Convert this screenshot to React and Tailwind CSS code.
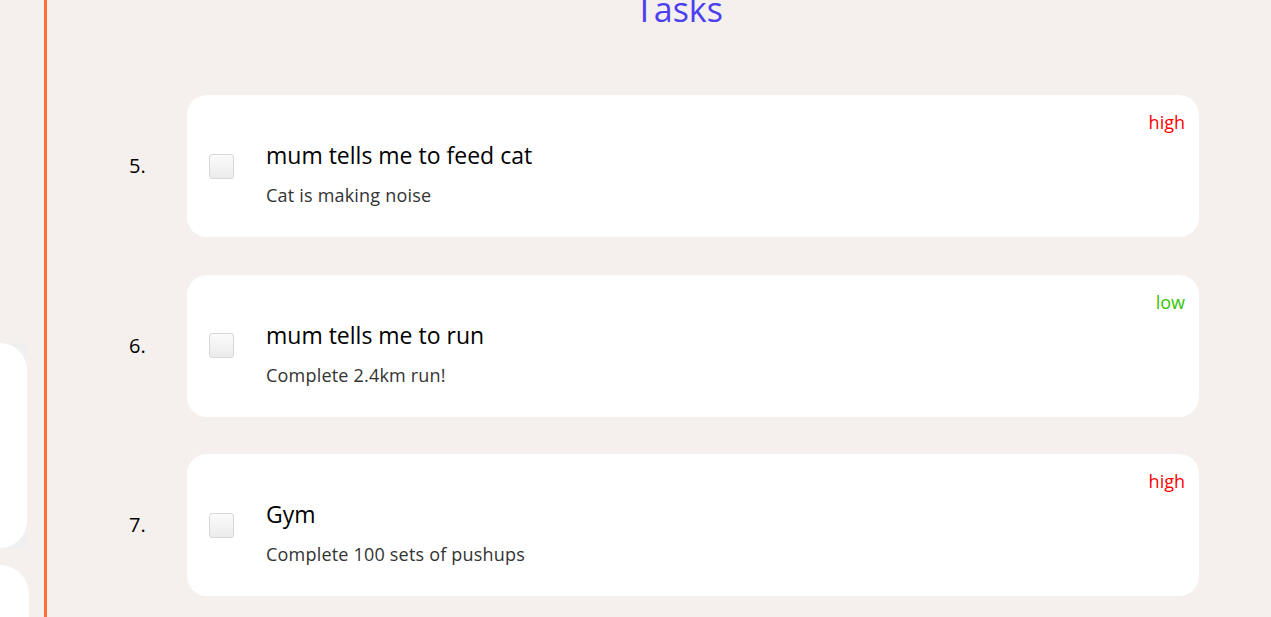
const tasks = [
  { n: 5, title: 'mum tells me to feed cat', desc: 'Cat is making noise', priority: 'high' },
  { n: 6, title: 'mum tells me to run', desc: 'Complete 2.4km run!', priority: 'low' },
  { n: 7, title: 'Gym', desc: 'Complete 100 sets of pushups', priority: 'high' },
];

function TaskRow({ task }) {
  return (
    <li className="flex items-center">
      <span className="w-[58px] pl-[82px] box-content text-[20px] text-black">{task.n}.</span>
      <div className="relative flex items-center w-[1012px] h-[142px] bg-white rounded-[20px]">
        <span
          className={
            'absolute top-[15px] right-[14px] text-[18px] leading-[24px] ' +
            (task.priority === 'high' ? 'text-[#ff0000]' : 'text-[#33c400]')
          }
        >
          {task.priority}
        </span>
        <div className="ml-[22px] w-[25px] h-[25px] rounded-[3px] border border-[#d8d8d8] bg-gradient-to-b from-[#fbfbfb] to-[#ebebeb]" />
        <div className="ml-[32px] mt-[15px] flex flex-col gap-[13px]">
          <span className="text-[23px] leading-[30px] text-black">{task.title}</span>
          <span className="text-[18px] leading-[24px] text-[#333333] tracking-[0.2px]">{task.desc}</span>
        </div>
      </div>
    </li>
  );
}

export default function App() {
  return (
    <div className="flex h-[617px] overflow-hidden bg-[#f5f0ed] font-['Open_Sans','Noto_Sans',sans-serif]">
      {/* sidebar */}
      <aside className="w-[44px] shrink-0 flex flex-col">
        <div className="h-[343px] shrink-0" />
        <div className="w-[27px] h-[205px] shrink-0 bg-[#f0f0f1]">
          <div className="w-full h-full bg-white rounded-r-[27px]" />
        </div>
        <div className="mt-[17px] w-[29px] h-[80px] shrink-0 bg-white rounded-tr-[30px]" />
      </aside>
      <main className="flex-1 border-l-[3px] border-[#ff6d3a]">
        <h1 className="-mt-[14px] pl-[40px] text-center text-[34px] leading-[46px] text-[#4c3ff0]">
          Tasks
        </h1>
        <ol className="mt-[63px] flex flex-col gap-[37.5px]">
          {tasks.map((t) => (
            <TaskRow key={t.n} task={t} />
          ))}
        </ol>
      </main>
    </div>
  );
}
